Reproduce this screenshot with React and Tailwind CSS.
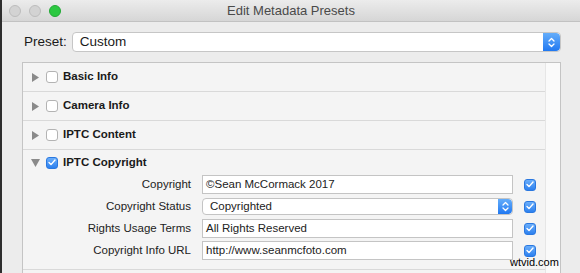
import React from "react";

const font = { fontFamily: '"Liberation Sans", Arial, Helvetica, sans-serif' };

function Stepper({ w = 17 }) {
  return (
    <div
      className="flex items-center justify-center self-stretch rounded-r-[4px] bg-gradient-to-b from-[#64adfa] to-[#1f78f1]"
      style={{ width: w }}
    >
      <svg width="7" height="11" viewBox="0 0 7 11" fill="none">
        <path d="M1 4 L3.5 1.5 L6 4" stroke="white" strokeWidth="1.3" strokeLinecap="round" strokeLinejoin="round" />
        <path d="M1 7 L3.5 9.5 L6 7" stroke="white" strokeWidth="1.3" strokeLinecap="round" strokeLinejoin="round" />
      </svg>
    </div>
  );
}

function Check({ checked }) {
  if (checked) {
    return (
      <div className="w-[12px] h-[12px] rounded-[3px] bg-gradient-to-b from-[#6aaefa] to-[#2b80ef] border border-[#2a78e0] flex items-center justify-center shrink-0">
        <svg width="8" height="7" viewBox="0 0 8 7" fill="none">
          <path d="M1 3.6 L3 5.6 L7 1" stroke="white" strokeWidth="1.4" strokeLinecap="round" strokeLinejoin="round" />
        </svg>
      </div>
    );
  }
  return <div className="w-[12px] h-[12px] rounded-[3px] bg-white border border-[#b3b3b3] shrink-0" />;
}

function Triangle({ open }) {
  return open ? (
    <svg width="9" height="8" viewBox="0 0 9 8" className="shrink-0">
      <path d="M0 0 L9 0 L4.5 8 Z" fill="#8a8a8a" />
    </svg>
  ) : (
    <svg width="9" height="9" viewBox="0 0 9 9" className="shrink-0">
      <path d="M1 0 L8 4.5 L1 9 Z" fill="#8a8a8a" />
    </svg>
  );
}

function Section({ label, checked, open }) {
  return (
    <div className={`flex items-center pl-[8px] ${open ? "h-[25px]" : "h-[29px] border-b border-[#d9d9d9]"}`}>
      <Triangle open={open} />
      <div className="ml-[6px]">
        <Check checked={checked} />
      </div>
      <span className="ml-[5px] text-[11.5px] font-bold text-[#1a1a1a] leading-none">{label}</span>
    </div>
  );
}

function Field({ label, value, select }) {
  return (
    <div className="flex items-center h-[19px]">
      <div className="w-[168px] text-right text-[11.5px] text-[#222] leading-none">{label}</div>
      <div className="ml-[11px] w-[311px] h-full">
        {select ? (
          <div className="flex h-[17px] mt-[1px] bg-white border border-[#c4c4c4] rounded-[4px] overflow-hidden">
            <div className="flex-1 flex items-center pl-[7px] text-[11.5px] text-[#222] leading-none">{value}</div>
            <Stepper w={14} />
          </div>
        ) : (
          <div className="h-full bg-white border border-[#c4c4c4] flex items-center pl-[3px] text-[11.5px] text-[#222] leading-none">
            {value}
          </div>
        )}
      </div>
      <div className="ml-[11px]">
        <Check checked />
      </div>
    </div>
  );
}

export default function App() {
  return (
    <div className="w-[580px] h-[273px] overflow-hidden relative flex bg-[#ececec]" style={font}>
      <div className="w-[2px] bg-[#2e2e2e] shrink-0" />
      <div className="flex-1 flex flex-col bg-[#ececec]">
        <div className="h-[22px] shrink-0 grid grid-cols-[1fr_auto_1fr] items-center border-b border-[#c2c2c2] bg-gradient-to-b from-[#ececec] to-[#d6d6d6]">
          <div className="flex items-center gap-[8px] pl-[7px]">
            <div className="w-[12px] h-[12px] rounded-full bg-[#d3d3d3] border border-[#bdbdbd]" />
            <div className="w-[12px] h-[12px] rounded-full bg-[#d3d3d3] border border-[#bdbdbd]" />
            <div className="w-[12px] h-[12px] rounded-full bg-[#2cc841] border border-[#22a935]" />
          </div>
          <div className="text-[13px] text-[#4a4a4a] leading-none">Edit Metadata Presets</div>
          <div />
        </div>

        <div className="flex items-center mt-[10px] pl-[22px] h-[20px]">
          <span className="text-[13.5px] text-[#1a1a1a] leading-none">Preset:</span>
          <div className="ml-[5px] w-[489px] h-[20px] flex bg-white border border-[#c6c6c6] rounded-[4px] overflow-hidden">
            <div className="flex-1 flex items-center pl-[7px] text-[13.5px] text-[#1a1a1a] leading-none">Custom</div>
            <Stepper w={17} />
          </div>
        </div>

        <div className="mt-[10px] ml-[20px] w-[539px] flex-1 flex border-t border-l border-r border-[#c4c4c4] bg-[#f4f4f4]">
          <div className="flex-1 flex flex-col">
            <Section label="Basic Info" />
            <Section label="Camera Info" />
            <Section label="IPTC Content" />
            <div className="flex flex-col border-b border-[#d9d9d9] pb-[9px]">
              <Section label="IPTC Copyright" checked open />
              <div className="flex flex-col gap-[3px]">
                <Field label="Copyright" value="©Sean McCormack 2017" />
                <Field label="Copyright Status" value="Copyrighted" select />
                <Field label="Rights Usage Terms" value="All Rights Reserved" />
                <Field label="Copyright Info URL" value="http://www.seanmcfoto.com" />
              </div>
            </div>
          </div>
          <div className="w-[15px] shrink-0 bg-[#fafafa] border-l border-[#e6e6e6]" />
        </div>
      </div>

      <span className="absolute left-[510px] top-[257px] text-[11px] text-black leading-none">wtvid.com</span>
    </div>
  );
}
